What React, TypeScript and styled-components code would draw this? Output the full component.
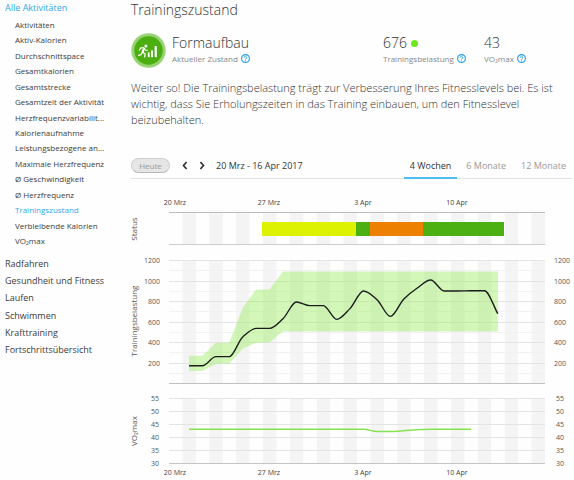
import React, { useState } from 'react';
import styled, { createGlobalStyle } from 'styled-components';

const GlobalStyle = createGlobalStyle`
  *, *::before, *::after { box-sizing: border-box; }
  body {
    margin: 0;
    background: #fefefe;
    color: #444;
    font-family: "Open Sans", "Noto Sans", sans-serif;
  }
`;

/* ---------- layout ---------- */

const Page = styled.div`
  display: flex;
  align-items: flex-start;
`;

const Sidebar = styled.nav`
  flex: 0 0 131px;
  padding-left: 5px;
`;

const Main = styled.main`
  flex: 1;
  min-width: 0;
  padding-right: 2px;
`;

/* ---------- sidebar ---------- */

const NavLink = styled.a<{ $active?: boolean }>`
  color: ${(p) => (p.$active ? '#30a9e8' : '#3c3c3c')};
  text-decoration: none;
  white-space: nowrap;
`;

const NavHeading = styled.div`
  font-size: 9px;
  line-height: 16px;
`;

const SubList = styled.ul`
  display: grid;
  grid-auto-rows: 1fr;
  align-items: center;
  min-height: 232px;
  margin: 1px 0 6px;
  padding: 0 0 0 10px;
  list-style: none;
  font-size: 8px;
  line-height: 14px;
`;

const SectionList = styled.ul`
  display: grid;
  grid-auto-rows: 1fr;
  align-items: center;
  min-height: 104px;
  margin: 0;
  padding: 0;
  list-style: none;
  font-size: 9px;
  line-height: 16px;
`;

/* ---------- header ---------- */

const Title = styled.h1`
  margin: 0;
  font-size: 14px;
  font-weight: 300;
  line-height: 20px;
  color: #333;
`;

const Summary = styled.section`
  display: grid;
  grid-template-columns: 252fr 101fr 88fr;
  margin-top: 13px;
`;

const Lead = styled.div`
  display: flex;
  align-items: flex-start;
  gap: 6px;
`;

const Stat = styled.div`
  display: flex;
  flex-direction: column;
`;

const StatValue = styled.div`
  display: flex;
  align-items: center;
  gap: 4px;
  font-size: 14px;
  font-weight: 300;
  line-height: 20px;
  color: #333;
`;

const StatLabel = styled.div`
  display: flex;
  align-items: center;
  gap: 3px;
  font-size: 8px;
  line-height: 11px;
  color: #888;
`;

const Dot = styled.span`
  width: 7px;
  height: 7px;
  border-radius: 50%;
  background: #6fe91d;
`;

const HelpButton = styled.button`
  display: flex;
  padding: 0;
  border: 0;
  background: none;
  cursor: pointer;
`;

const Advice = styled.p`
  margin: 12px 0 0;
  font-size: 11px;
  font-weight: 300;
  line-height: 16px;
  color: #333;
`;

/* ---------- toolbar ---------- */

const Toolbar = styled.div`
  display: flex;
  align-items: stretch;
  height: 26px;
  margin-top: 25px;
  border-bottom: 1px solid #e2e2e2;
`;

const TodayButton = styled.button`
  align-self: center;
  width: 39px;
  height: 15px;
  margin-right: 12px;
  padding: 0;
  border: 1px solid #cfcfcf;
  border-bottom-color: #b8b8b8;
  border-radius: 8px;
  background: #e6e6e6;
  color: #999;
  font: inherit;
  font-size: 8px;
  line-height: 12px;
`;

const ArrowButton = styled.button`
  display: flex;
  align-items: center;
  margin-right: 11px;
  padding: 0;
  border: 0;
  background: none;
  color: #333;
  cursor: pointer;
`;

const Range = styled.span`
  align-self: center;
  font-size: 9px;
  line-height: 16px;
  color: #333;
`;

const Tabs = styled.div`
  display: flex;
  gap: 3px;
  margin-left: auto;
`;

const Tab = styled.button<{ $active: boolean }>`
  margin-bottom: -1px;
  padding: 2px 6px 0;
  border: 0;
  border-bottom: 2px solid ${(p) => (p.$active ? '#4fbcf0' : 'transparent')};
  background: none;
  color: ${(p) => (p.$active ? '#333' : '#999')};
  font: inherit;
  font-size: 9px;
  line-height: 16px;
  white-space: nowrap;
  cursor: pointer;
`;

/* ---------- charts ---------- */

const Charts = styled.section`
  display: flex;
  flex-direction: column;
  margin-top: 15px;
`;

const Chart = styled.svg`
  display: block;
  width: 100%;
  height: auto;
  overflow: visible;
  font-family: "Open Sans", "Noto Sans", sans-serif;
  font-size: 7px;
  fill: #555;
`;

const AxisTitle = styled.text`
  font-size: 8px;
  text-anchor: middle;
`;

const DateLabel = styled.text`
  text-anchor: middle;
  fill: #444;
`;

const CHART_W = 441;
const PLOT_X = 38;
const PLOT_W = 376;
const DAY = PLOT_W / 28;

const WEEKS = ['20 Mrz', '27 Mrz', '3 Apr', '10 Apr'];

type Pt = [number, number];

/* Monotone cubic curve through the points. */
function smoothPath(pts: Pt[]): string {
  const n = pts.length;
  const slope = pts.slice(1).map((p, i) => (p[1] - pts[i][1]) / (p[0] - pts[i][0]));
  const tan = pts.map((_, i) => {
    if (i === 0) return slope[0];
    if (i === n - 1) return slope[n - 2];
    const a = slope[i - 1];
    const b = slope[i];
    return a * b <= 0 ? 0 : (2 * a * b) / (a + b);
  });
  let d = `M${pts[0][0]},${pts[0][1]}`;
  for (let i = 1; i < n; i++) {
    const h = (pts[i][0] - pts[i - 1][0]) / 3;
    d += `C${pts[i - 1][0] + h},${pts[i - 1][1] + tan[i - 1] * h} ${pts[i][0] - h},${pts[i][1] - tan[i] * h} ${pts[i][0]},${pts[i][1]}`;
  }
  return d;
}

const Stripes = ({ y, height }: { y: number; height: number }) => (
  <g fill="#f4f4f4">
    {Array.from({ length: 14 }, (_, i) => (
      <rect key={i} x={PLOT_X + DAY * (2 * i + 1)} y={y} width={DAY} height={height} />
    ))}
  </g>
);

const Line = ({ y, color }: { y: number; color: string }) => (
  <rect x={PLOT_X} y={Math.round(y)} width={PLOT_W} height={1} fill={color} />
);

const DateLabels = ({ y }: { y: number }) => (
  <>
    {WEEKS.map((w, i) => (
      <DateLabel key={w} x={PLOT_X + 6 + i * 7 * DAY} y={y}>{w}</DateLabel>
    ))}
  </>
);

const PHASES = [
  { from: 131, to: 225, color: '#dcf200' },
  { from: 225, to: 239, color: '#4caf12' },
  { from: 239, to: 292, color: '#ee8000' },
  { from: 292, to: 373, color: '#4caf12' },
];

const StatusChart = () => (
  <Chart viewBox={`0 0 ${CHART_W} 54`} role="img" aria-label="Status">
    <DateLabels y={11} />
    <Stripes y={19} height={32} />
    <Line y={18} color="#bdbdbd" />
    <Line y={50} color="#cccccc" />
    {PHASES.map((p) => (
      <rect key={p.from} x={p.from} y={28} width={p.to - p.from} height={14} fill={p.color} />
    ))}
    <AxisTitle transform="translate(6 35) rotate(-90)">Status</AxisTitle>
  </Chart>
);

const LOAD = [169, 169, 257, 257, 449, 533, 533, 627, 790, 755, 755, 621, 728, 898, 813, 650, 820, 927, 1005, 898, 897, 900, 900, 676];
const UPPER = [266, 266, 393, 393, 732, 913, 913, ...Array(17).fill(1088)];
const LOWER = [117, 117, 188, 188, 335, 393, 398, ...Array(17).fill(503)];

const loadY = (v: number) => 135 - v * 0.1025;
const loadX = (i: number) => 58 + i * DAY;

const LoadChart = () => {
  const band = [
    ...UPPER.map((v, i) => `${loadX(i)},${loadY(v)}`),
    ...LOWER.map((v, i) => `${loadX(i)},${loadY(v)}`).reverse(),
  ].join(' ');
  return (
    <Chart viewBox={`0 0 ${CHART_W} 138`} role="img" aria-label="Trainingsbelastung">
      <Stripes y={12} height={123} />
      {Array.from({ length: 12 }, (_, i) => (
        <Line key={i} y={loadY((i + 1) * 100)} color={i % 2 ? '#e4e4e4' : '#f1f1f1'} />
      ))}
      <Line y={135} color="#c0c0c0" />
      <polygon points={band} fill="#90ee50" fillOpacity={0.4} />
      <path
        d={smoothPath(LOAD.map((v, i): Pt => [loadX(i), loadY(v)]))}
        fill="none"
        stroke="#1c1c1c"
        strokeWidth={1.4}
      />
      {[200, 400, 600, 800, 1000, 1200].map((v) => (
        <g key={v}>
          <text x={29} y={loadY(v) + 3} textAnchor="end">{v}</text>
          <text x={423} y={loadY(v) + 3}>{v}</text>
        </g>
      ))}
      <AxisTitle transform="translate(6 73) rotate(-90)">Trainingsbelastung</AxisTitle>
    </Chart>
  );
};

const VO2 = [...Array(14).fill(43), 42.1, 42.1, 42.4, 42.8, 43, 43, 43, 43];
const vo2Y = (v: number) => 77 - (v - 30) * 2.6;

const Vo2Chart = () => (
  <Chart viewBox={`0 0 ${CHART_W} 92`} role="img" aria-label="VO₂max">
    <Stripes y={12} height={65} />
    {[35, 40, 45, 50, 55].map((v) => (
      <Line key={v} y={vo2Y(v)} color="#e4e4e4" />
    ))}
    <Line y={77} color="#c4c4c4" />
    <path
      d={smoothPath(VO2.map((v, i): Pt => [58 + i * DAY, vo2Y(v)]))}
      fill="none"
      stroke="#86e34f"
      strokeWidth={1.4}
    />
    {[30, 35, 40, 45, 50, 55].map((v) => (
      <g key={v}>
        <text x={28} y={vo2Y(v) + 3} textAnchor="end">{v}</text>
        <text x={425} y={vo2Y(v) + 3}>{v}</text>
      </g>
    ))}
    <DateLabels y={89} />
    <AxisTitle transform="translate(6 45) rotate(-90)">VO₂max</AxisTitle>
  </Chart>
);

/* ---------- icons ---------- */

const Help = ({ label }: { label: string }) => (
  <HelpButton aria-label={label}>
    <svg width="9" height="9" viewBox="0 0 18 18" fill="none" stroke="#1d9ce8">
      <circle cx="9" cy="9" r="7.8" strokeWidth="2.2" />
      <path d="M6.4 7.2a2.6 2.6 0 1 1 3.9 2.3c-.9.5-1.3.9-1.3 1.7" strokeWidth="1.8" />
      <circle cx="9" cy="13.3" r="1" fill="#1d9ce8" stroke="none" />
    </svg>
  </HelpButton>
);

const FitnessBadge = () => (
  <svg width="35" height="35" viewBox="0 0 35 35" aria-hidden="true">
    <circle cx="17.5" cy="17.5" r="17.2" fill="#97d375" />
    <circle cx="17.5" cy="17.5" r="14.2" fill="#4bae11" />
    <circle cx="14.9" cy="12.9" r="1.5" fill="#fff" />
    <g fill="none" stroke="#fff" strokeLinecap="round" strokeLinejoin="round">
      <path d="M12.9 15.5l-1.3 3.6" strokeWidth="2.2" />
      <path d="M12.6 14.7l-3 .2-1.2 2.3" strokeWidth="1.1" />
      <path d="M13.5 15.5l1.2 1.7 1.6.1" strokeWidth="1.1" />
      <path d="M11.8 19.3l2.3 1.6-.4 3" strokeWidth="1.3" />
      <path d="M11.2 19.6l-1.2 2.1-2.4.7" strokeWidth="1.3" />
    </g>
    <g fill="#fff">
      <rect x="16.8" y="19.4" width="1.9" height="4.8" />
      <rect x="20" y="17.4" width="1.9" height="6.8" />
      <rect x="23.6" y="13" width="2.2" height="11.2" />
    </g>
  </svg>
);

const Chevron = ({ left }: { left?: boolean }) => (
  <svg width="6" height="9" viewBox="0 0 6 9" fill="none" stroke="currentColor" strokeWidth="1.7" aria-hidden="true">
    <path d={left ? 'M4.6 1L1.5 4.5l3.1 3.5' : 'M1.4 1l3.1 3.5L1.4 8'} />
  </svg>
);

/* ---------- page ---------- */

const ACTIVITIES = [
  'Aktivitäten', 'Aktiv-Kalorien', 'Durchschnittspace', 'Gesamtkalorien', 'Gesamtstrecke',
  'Gesamtzeit der Aktivität', 'Herzfrequenzvariabilit...', 'Kalorienaufnahme',
  'Leistungsbezogene an...', 'Maximale Herzfrequenz', 'Ø Geschwindigkeit', 'Ø Herzfrequenz',
  'Trainingszustand', 'Verbleibende Kalorien', 'VO₂max',
];

const SECTIONS = ['Radfahren', 'Gesundheit und Fitness', 'Laufen', 'Schwimmen', 'Krafttraining', 'Fortschrittsübersicht'];

const PERIODS = ['4 Wochen', '6 Monate', '12 Monate'];

export default function App() {
  const [period, setPeriod] = useState(PERIODS[0]);
  return (
    <>
      <GlobalStyle />
      <Page>
        <Sidebar>
          <NavHeading><NavLink href="#alle" $active>Alle Aktivitäten</NavLink></NavHeading>
          <SubList>
            {ACTIVITIES.map((a) => (
              <li key={a}><NavLink href="#bericht" $active={a === 'Trainingszustand'}>{a}</NavLink></li>
            ))}
          </SubList>
          <SectionList>
            {SECTIONS.map((s) => (
              <li key={s}><NavLink href="#bereich">{s}</NavLink></li>
            ))}
          </SectionList>
        </Sidebar>
        <Main>
          <Title>Trainingszustand</Title>
          <Summary>
            <Lead>
              <FitnessBadge />
              <Stat>
                <StatValue>Formaufbau</StatValue>
                <StatLabel>Aktueller Zustand <Help label="Hilfe: Aktueller Zustand" /></StatLabel>
              </Stat>
            </Lead>
            <Stat>
              <StatValue>676 <Dot /></StatValue>
              <StatLabel>Trainingsbelastung <Help label="Hilfe: Trainingsbelastung" /></StatLabel>
            </Stat>
            <Stat>
              <StatValue>43</StatValue>
              <StatLabel>VO₂max <Help label="Hilfe: VO₂max" /></StatLabel>
            </Stat>
          </Summary>
          <Advice>
            Weiter so! Die Trainingsbelastung trägt zur Verbesserung Ihres Fitnesslevels bei. Es ist
            wichtig, dass Sie Erholungszeiten in das Training einbauen, um den Fitnesslevel beizubehalten.
          </Advice>
          <Toolbar>
            <TodayButton>Heute</TodayButton>
            <ArrowButton aria-label="Zurück"><Chevron left /></ArrowButton>
            <ArrowButton aria-label="Weiter"><Chevron /></ArrowButton>
            <Range>20 Mrz - 16 Apr 2017</Range>
            <Tabs>
              {PERIODS.map((p) => (
                <Tab key={p} $active={p === period} aria-pressed={p === period} onClick={() => setPeriod(p)}>{p}</Tab>
              ))}
            </Tabs>
          </Toolbar>
          <Charts>
            <StatusChart />
            <LoadChart />
            <Vo2Chart />
          </Charts>
        </Main>
      </Page>
    </>
  );
}
